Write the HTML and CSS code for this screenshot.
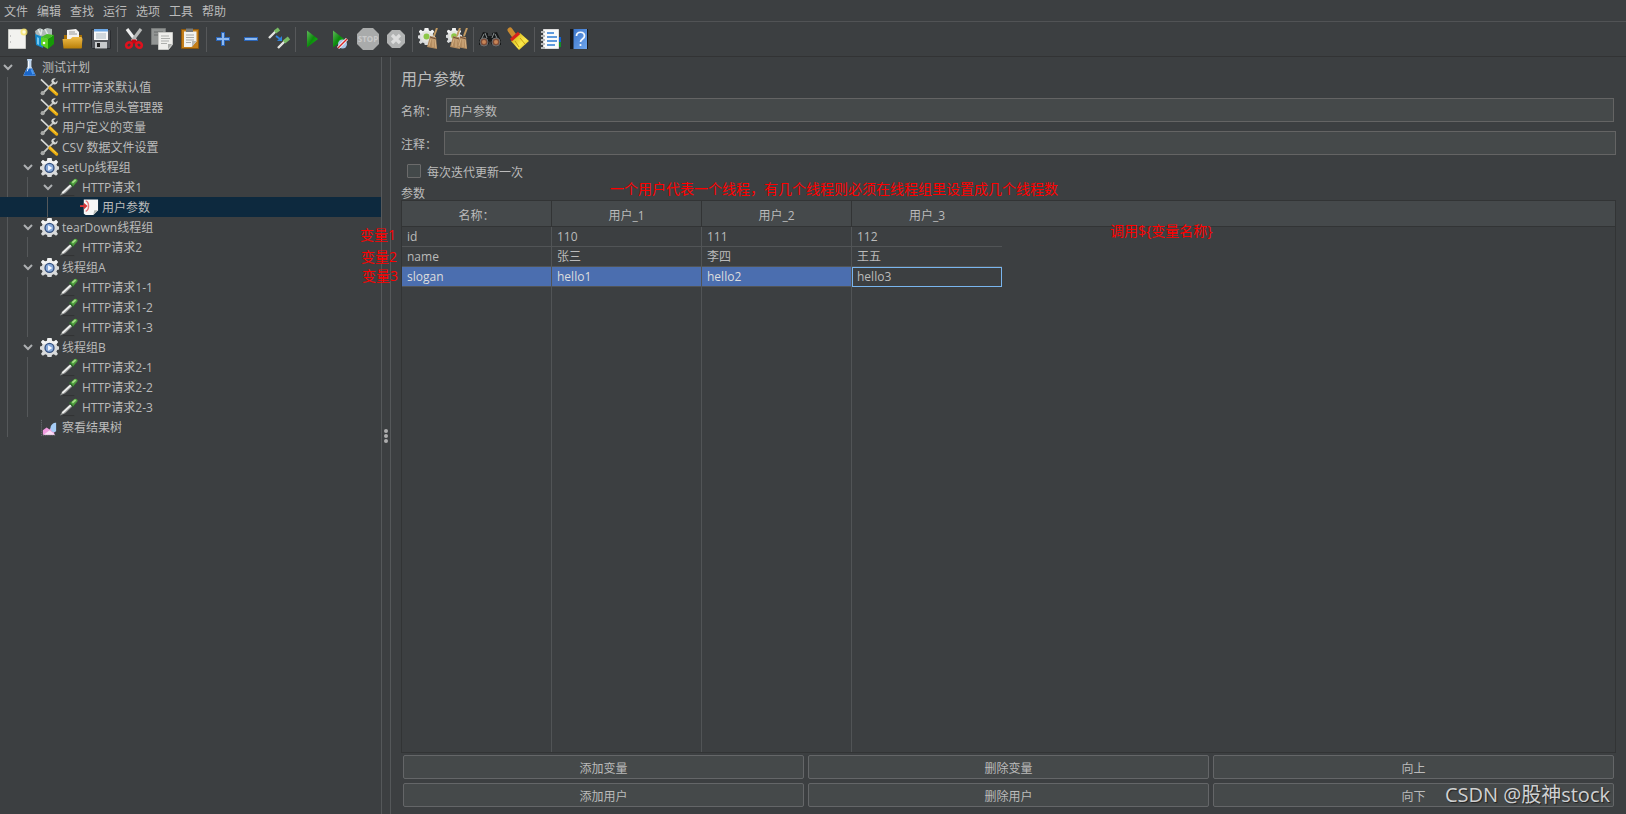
FILE: index.html
```html
<!DOCTYPE html>
<html lang="zh-CN">
<head>
<meta charset="utf-8">
<title>用户参数</title>
<link rel="stylesheet" href="styles.css">
</head>
<body>
<svg class="defs" aria-hidden="true">
  <defs>
    <linearGradient id="gGreen" x1="0" y1="0" x2="1" y2="1"><stop offset="0" stop-color="#5fb95a"/><stop offset=".5" stop-color="#0d8a0d"/><stop offset="1" stop-color="#12d012"/></linearGradient>
    <linearGradient id="gGold" x1="0" y1="0" x2="0" y2="1"><stop offset="0" stop-color="#f0bd4a"/><stop offset="1" stop-color="#b97f08"/></linearGradient>
    <linearGradient id="gYellow" x1="0" y1="0" x2="1" y2="1"><stop offset="0" stop-color="#c9a50a"/><stop offset=".6" stop-color="#fbe94a"/><stop offset="1" stop-color="#d0a80a"/></linearGradient>
    <linearGradient id="gBlue" x1="0" y1="0" x2="1" y2="1"><stop offset="0" stop-color="#3b74c9"/><stop offset="1" stop-color="#6ea6ee"/></linearGradient>
    <symbol id="tools" viewBox="0 0 20 20">
      <path d="M3 16 15 4" stroke="#c4c6c4" stroke-width="2"/>
      <path d="M18.500 2.500 16 5 14 3 16.500.4C13.500 0 11.500 1.500 12 4.200L14.500 6.800C17 7.200 19 5 18.500 2.500Z" fill="#d6d8d6"/>
      <circle cx="2.800" cy="16" r="2.200" fill="#a6a8a6"/>
      <path d="M1 1.500 10 10" stroke="#d8dad8" stroke-width="1.800"/>
      <path d="M10.500 10.500 17.500 17" stroke="#e9ac10" stroke-width="3.400" stroke-linecap="round"/>
      <path d="M10.500 10 17 16" stroke="#ffd84a" stroke-width="1"/>
    </symbol>
    <symbol id="gear" viewBox="0 0 20 20">
      <path d="M8 0h4l.6 3 1.800.8 2.600-1.600 1.900 2-1.600 2.500.8 1.800 2.900.5v3l-2.900.6-.8 1.600 1.600 2.600-2 2-2.500-1.600-1.800.7L12 20.500H8l-.6-2.600-1.800-.7L3 18.800l-2-2 1.700-2.600-.8-1.600L-.5 12V9l2.400-.5.8-1.800L1.100 4.200 3 2.200l2.600 1.600L7.400 3Z" fill="#d9dbdc"/>
      <path d="M8 0h4l.6 3 1.800.8 2.600-1.600 1.900 2-1.600 2.500H2.700L1.100 4.200 3 2.200l2.600 1.600L7.400 3Z" fill="#f1f2f2"/>
      <circle cx="10" cy="10.400" r="5.400" fill="#33507f"/><circle cx="10" cy="10.400" r="4" fill="#86a9da"/><path d="M8.500 7.500 13 10.400l-4.500 3Z" fill="#f5f8ff"/>
    </symbol>
    <symbol id="dropper" viewBox="0 0 20 20">
      <path d="M3 18.500h12" stroke="#303234" stroke-width="1"/>
      <path d="M0 18.500 2.500 14 10.500 6.500l2.500 2.500-7.500 7Z" fill="#989a98"/><path d="M2.500 16 11.500 7.500" stroke="#f4f4f4" stroke-width="1.700"/>
      <path d="m10 4.500 4.500 4.500" stroke="#2d622a" stroke-width="2"/>
      <path d="m11 5 3.500-3.500c1.500-1.500 4.500-.5 4 2l-4.500 5Z" fill="#4d9e3d"/><path d="m13 5 3.500-3" stroke="#a6dc87" stroke-width="2"/>
    </symbol>
    <symbol id="flask" viewBox="0 0 20 20">
      <path d="M7.500 1h5v1.500L12 3v6l4.200 8.500c.4 1-.2 1.500-1.200 1.500H5c-1 0-1.600-.5-1.200-1.500L8 9V3l-.5-.5Z" fill="#c2d7ee"/>
      <path d="M7 11h6l3 6.500c.3.900-.4 1.200-1 1.200H5c-.8 0-1.300-.4-1-1.200Z" fill="#1b67c9"/><path d="M9 3v7l-1.500 4" fill="none" stroke="#fff"/><path d="m12 12 2 5" stroke="#4f9bf1" stroke-width="2"/>
    </symbol>
    <symbol id="param" viewBox="0 0 20 20">
      <path d="M4 1.500h15V13l-5 5H6L4 16.500Z" fill="#f7f7f7"/><path d="M19 13h-4l-1 5Z" fill="#b8bbb6"/>
      <path d="M0 8.500h5" stroke="#d83437" stroke-width="2"/><path d="M4 5v7l4-3.500Z" fill="#d83437"/><path d="M6 3c4 1.500 4 9.500 0 11" fill="none" stroke="#e77779" stroke-width="1.500"/>
    </symbol>
    <symbol id="chart" viewBox="0 0 20 20">
      <path d="M1.500 2v16.500h15" fill="none" stroke="#717477" stroke-dasharray="1 1"/>
      <path d="M3 13 7 10l3 2 5-5v10.500H3Z" fill="#f19de0"/><path d="M11 11c0-4 3-6 6-6v9c-3 2-5 1-6-3Z" fill="#a6cdf6"/><path d="M4 17.500 10 13l6 4.500H4Z" fill="#fae0f7"/>
    </symbol>
    <symbol id="chev" viewBox="0 0 10 10"><path d="m1 3 4 4 4-4" fill="none" stroke="#adafb1" stroke-width="2"/></symbol>
    <symbol id="i-new" viewBox="0 0 24 24"><path d="M3.500 2.500h17v19h-17Z" fill="#f2f2ef" stroke="#c8c9c5"/><path d="M5 9h1M5 15h1" stroke="#999"/><circle cx="19" cy="5" r="3.500" fill="#f7e566" opacity=".8"/><circle cx="19" cy="5" r="1.700" fill="#fffce0"/></symbol>
    <symbol id="i-templates" viewBox="0 0 24 24"><path d="M2 4 7 1l3 2 4-2 5 1v8l-8 3-8-4Z" fill="#aeb9b8"/><path d="m5 2 3 6M12 2l3 6M9 2 8 7" stroke="#e0e7e6" stroke-width="1.500"/><path d="m2 7 8 3v11l-7-3Z" fill="#1389ca"/><path d="m4 10 2 1v7l-2-1Z" fill="#73c6ef"/><path d="m8 10 7 2v10l-7-4Z" fill="#5bd321"/><path d="m15 12 6-4v9l-6 5Z" fill="#169907"/><path d="m8 10 6-3 7 1-6 4Z" fill="#45bd22"/><circle cx="11" cy="16" r="1.300" fill="#fff"/></symbol>
    <symbol id="i-open" viewBox="0 0 24 24"><path d="M3 8h18v13H3Z" fill="#a66e05"/><path d="m6 3 9-1 3 3v8H6Z" fill="#f3f3f3"/><path d="M8 5h6M8 7h8" stroke="#999"/><path d="M1.500 12h8l2-2h9l1 2-1 9.500h-18Z" fill="url(#gGold)"/></symbol>
    <symbol id="i-save" viewBox="0 0 24 24"><path d="M2.500 2.500h18l1 1v18h-18l-1-1Z" fill="#53565b" stroke="#2b2d30"/><path d="M5 2h14v11H5Z" fill="#f8f8f8"/><path d="M5 2h14v2.500H5Z" fill="#6da8e6"/><path d="M7 7h10M7 9h10M7 11h10" stroke="#a8b6bf"/><path d="M6 15h12v6.500H6Z" fill="#c8cacc"/><path d="M8 16h3v4H8Z" fill="#222"/></symbol>
    <symbol id="i-cut" viewBox="0 0 24 24"><path d="M5 2 14 14" stroke="#eee" stroke-width="3.200"/><path d="M19 2 10 14" stroke="#b7b9b8" stroke-width="3.200"/><path d="M9.500 14.500h5" stroke="#c50712" stroke-width="4"/><ellipse cx="7" cy="18" rx="3" ry="2.600" transform="rotate(-38 7 18)" fill="none" stroke="#df111d" stroke-width="2.600"/><ellipse cx="17" cy="18" rx="3" ry="2.600" transform="rotate(38 17 18)" fill="none" stroke="#df111d" stroke-width="2.600"/></symbol>
    <symbol id="i-copy" viewBox="0 0 24 24"><path d="M1.500 1.500h14v16h-14Z" fill="#929594" stroke="#787b7a"/><path d="M4 5h9M4 8h5" stroke="#686b6a"/><path d="M8.500 5.500h14v12l-4 5h-10Z" fill="#eeeeeb" stroke="#c5c6c3"/><path d="M11 9h8M11 11.500h9M11 14h8M11 16.500h6" stroke="#adafac"/><path d="M22 17h-4v5Z" fill="#a8aaa7"/></symbol>
    <symbol id="i-paste" viewBox="0 0 24 24"><path d="M3.500 2.500h17v19h-17Z" fill="#c47e19" stroke="#8d570b"/><path d="M6 4.500h12.500v10l-5 5.500H6Z" fill="#f2f2ef"/><path d="M8 1.500h7V5H8Z" fill="#777b7c"/><path d="M8 8h8M8 10.500h8M8 13h8M8 15.500h5" stroke="#a8aaa7"/><path d="M18.500 14H14v6Z" fill="#b6b8b5"/></symbol>
    <symbol id="i-plus" viewBox="0 0 24 24"><path d="M5 12h14M12 5v14" stroke="#2b65b7" stroke-width="4"/><path d="M6 12h12M12 6v12" stroke="#8db9f0" stroke-width="2"/></symbol>
    <symbol id="i-minus" viewBox="0 0 24 24"><path d="M5 12h14" stroke="#2b65b7" stroke-width="4"/><path d="M6 12h12" stroke="#8db9f0" stroke-width="2"/></symbol>
    <symbol id="i-toggle" viewBox="0 0 24 24"><path d="m2 11 7-7M11 21l7-7" stroke="#e2e3e0" stroke-width="2.400"/><path d="m8 5 4-3M17 15l5-4" stroke="#78bb64" stroke-width="3.800"/><path d="m9 9 4 3" stroke="#3081dc" stroke-width="1.800"/><path d="m15 9 0 5-5 0Z" fill="#3081dc"/></symbol>
    <symbol id="i-run" viewBox="0 0 24 24"><path d="M7 3.500 18 12 7 20.500Z" fill="url(#gGreen)"/></symbol>
    <symbol id="i-runno" viewBox="0 0 24 24"><path d="M5 3.500 16 12 5 20.500Z" fill="url(#gGreen)"/><circle cx="14.500" cy="17" r="4.500" fill="#a9c4e5"/><path d="m10 21 9-9" stroke="#fff" stroke-width="3"/><path d="m10 21 9-9" stroke="#d42525" stroke-width="1.500"/></symbol>
    <symbol id="i-stop" viewBox="0 0 24 24"><path d="M7 1h10l6 6v10l-6 6H7l-6-6V7Z" fill="#a9abab"/><text x="12" y="15" class="stop-text">STOP</text></symbol>
    <symbol id="i-shut" viewBox="0 0 24 24"><path d="M8 3h8l5 5v8l-5 5H8l-5-5V8Z" fill="#b1b3b3"/><path d="m8 8 8 8M16 8l-8 8" stroke="#dcdddd" stroke-width="3.200"/></symbol>
    <symbol id="broom" viewBox="0 0 12 22"><path d="M11 0 8 8" stroke="#c29a61" stroke-width="2"/><path d="m4 8 6 1 1 12-10-2Z" fill="#b38c60"/><path d="M5 11 3 18M7 11v8M9 11l1 9" stroke="#d4b083"/><path d="m4 9 6 2" stroke="#725139"/></symbol>
    <symbol id="i-clear" viewBox="0 0 24 24"><svg x="1" y="1" width="17" height="17" viewBox="0 0 20 20"><use href="#gear"/><circle cx="10" cy="10" r="6.500" fill="#e4e5df"/><circle cx="10" cy="10" r="3.500" fill="#8cc747"/></svg><use href="#broom" x="9" y="1" width="12" height="22"/></symbol>
    <symbol id="i-clearall" viewBox="0 0 24 24"><svg x="1" y="1" width="16" height="16" viewBox="0 0 20 20"><use href="#gear"/><circle cx="10" cy="10" r="6.500" fill="#e4e5df"/><circle cx="10" cy="10" r="3.500" fill="#8cc747"/></svg><use href="#broom" x="4" y="1" width="12" height="22"/><use href="#broom" x="11" y="1" width="12" height="22"/></symbol>
    <symbol id="i-find" viewBox="0 0 24 24"><path d="m5 5 5 1v3h4V6l5-1 4 9v4H14l-2-4-2 4H1v-4Z" fill="#17191a"/><path d="m6 7-3 6M17 7l3 6M7 6l2 5M16 6l-2 5" stroke="#8a9192"/><circle cx="6" cy="15" r="4" fill="#7e4d38" stroke="#6a6e70"/><circle cx="18" cy="15" r="4" fill="#7e4d38" stroke="#6a6e70"/><circle cx="6" cy="15" r="2" fill="#c98557"/><circle cx="18" cy="15" r="2" fill="#c98557"/></symbol>
    <symbol id="i-sweep" viewBox="0 0 24 24"><path d="m4 3 5 7" stroke="#c98a30" stroke-width="5" stroke-linecap="round"/><path d="m5 14 9-8 9 8-10 9Z" fill="url(#gYellow)"/><path d="m5 13 8-7" stroke="#d6211b" stroke-width="3"/><path d="m9 14 4 6M14 11l5 6" stroke="#c39d12"/></symbol>
    <symbol id="i-list" viewBox="0 0 24 24"><path d="M18 10h4v5h-4Z" fill="#1261d1"/><path d="M18 15h4v5h-4Z" fill="#128f2a"/><path d="M4.500 2.500h15v19h-15Z" fill="#fafafa" stroke="#ddd"/><path d="M2 5h4M2 9h4M2 13h4M2 17h4M2 21h4" stroke="#b6b8b9" stroke-width="2"/><path d="M8 6h7M8 10h10M8 14h10M8 18h8" stroke="#2c7bd2" stroke-width="1.500"/></symbol>
    <symbol id="i-help" viewBox="0 0 24 24"><path d="M3 2h18v20H3Z" fill="#18191b"/><path d="M6.500 2H20v20H6.500Z" fill="url(#gBlue)"/><path d="M9.500 9c0-5 8-5 8 0 0 3-4 3-4 6M13.500 17v2" fill="none" stroke="#f4f8fe" stroke-width="1.700"/></symbol>
  </defs>
</svg>

<nav class="menubar">
  <button>文件</button><button>编辑</button><button>查找</button><button>运行</button><button>选项</button><button>工具</button><button>帮助</button>
</nav>

<div class="toolbar" role="toolbar">
  <button aria-label="新建"><svg><use href="#i-new"/></svg></button>
  <button aria-label="模板"><svg><use href="#i-templates"/></svg></button>
  <button aria-label="打开"><svg><use href="#i-open"/></svg></button>
  <button aria-label="保存"><svg><use href="#i-save"/></svg></button>
  <span class="sep"></span>
  <button aria-label="剪切"><svg><use href="#i-cut"/></svg></button>
  <button aria-label="复制"><svg><use href="#i-copy"/></svg></button>
  <button aria-label="粘贴"><svg><use href="#i-paste"/></svg></button>
  <span class="sep"></span>
  <button aria-label="展开"><svg><use href="#i-plus"/></svg></button>
  <button aria-label="折叠"><svg><use href="#i-minus"/></svg></button>
  <button aria-label="切换"><svg><use href="#i-toggle"/></svg></button>
  <span class="sep"></span>
  <button aria-label="启动"><svg><use href="#i-run"/></svg></button>
  <button aria-label="不停顿启动"><svg><use href="#i-runno"/></svg></button>
  <button aria-label="停止"><svg><use href="#i-stop"/></svg></button>
  <button aria-label="关闭"><svg><use href="#i-shut"/></svg></button>
  <span class="sep"></span>
  <button aria-label="清除"><svg><use href="#i-clear"/></svg></button>
  <button aria-label="清除全部"><svg><use href="#i-clearall"/></svg></button>
  <span class="sep"></span>
  <button aria-label="查找"><svg><use href="#i-find"/></svg></button>
  <button aria-label="重置查找"><svg><use href="#i-sweep"/></svg></button>
  <span class="sep"></span>
  <button aria-label="函数助手"><svg><use href="#i-list"/></svg></button>
  <button aria-label="帮助"><svg><use href="#i-help"/></svg></button>
</div>

<div class="workspace">
  <aside class="tree">
    <div class="node"><svg class="chev"><use href="#chev"/></svg><svg class="ico"><use href="#flask"/></svg><span>测试计划</span></div>
    <ul class="d1">
      <li><div class="node"><svg class="ico"><use href="#tools"/></svg><span>HTTP请求默认值</span></div></li>
      <li><div class="node"><svg class="ico"><use href="#tools"/></svg><span>HTTP信息头管理器</span></div></li>
      <li><div class="node"><svg class="ico"><use href="#tools"/></svg><span>用户定义的变量</span></div></li>
      <li><div class="node"><svg class="ico"><use href="#tools"/></svg><span>CSV 数据文件设置</span></div></li>
      <li><div class="node"><svg class="chev"><use href="#chev"/></svg><svg class="ico"><use href="#gear"/></svg><span>setUp线程组</span></div>
        <ul class="d2">
          <li><div class="node"><svg class="chev"><use href="#chev"/></svg><svg class="ico"><use href="#dropper"/></svg><span>HTTP请求1</span></div>
            <ul class="d3"><li><div class="node selected"><svg class="ico"><use href="#param"/></svg><span>用户参数</span></div></li></ul>
          </li>
        </ul>
      </li>
      <li><div class="node"><svg class="chev"><use href="#chev"/></svg><svg class="ico"><use href="#gear"/></svg><span>tearDown线程组</span></div>
        <ul class="d2"><li><div class="node"><svg class="ico"><use href="#dropper"/></svg><span>HTTP请求2</span></div></li></ul>
      </li>
      <li><div class="node"><svg class="chev"><use href="#chev"/></svg><svg class="ico"><use href="#gear"/></svg><span>线程组A</span></div>
        <ul class="d2">
          <li><div class="node"><svg class="ico"><use href="#dropper"/></svg><span>HTTP请求1-1</span></div></li>
          <li><div class="node"><svg class="ico"><use href="#dropper"/></svg><span>HTTP请求1-2</span></div></li>
          <li><div class="node"><svg class="ico"><use href="#dropper"/></svg><span>HTTP请求1-3</span></div></li>
        </ul>
      </li>
      <li><div class="node"><svg class="chev"><use href="#chev"/></svg><svg class="ico"><use href="#gear"/></svg><span>线程组B</span></div>
        <ul class="d2">
          <li><div class="node"><svg class="ico"><use href="#dropper"/></svg><span>HTTP请求2-1</span></div></li>
          <li><div class="node"><svg class="ico"><use href="#dropper"/></svg><span>HTTP请求2-2</span></div></li>
          <li><div class="node"><svg class="ico"><use href="#dropper"/></svg><span>HTTP请求2-3</span></div></li>
        </ul>
      </li>
      <li><div class="node"><svg class="ico"><use href="#chart"/></svg><span>察看结果树</span></div></li>
    </ul>
  </aside>
  <div class="divider"><i></i><i></i><i></i></div>
  <main class="panel">
    <h1>用户参数</h1>
    <div class="field name"><label for="name">名称：</label><input id="name" type="text" value="用户参数"></div>
    <div class="field"><label for="comment">注释：</label><input id="comment" type="text"></div>
    <label class="check"><input type="checkbox"><span>每次迭代更新一次</span></label>
    <div class="caption">参数</div>
    <div class="grid">
      <table>
        <colgroup><col class="c"><col class="c"><col class="c"><col class="c"><col></colgroup>
        <thead><tr><th>名称：</th><th>用户_1</th><th>用户_2</th><th>用户_3</th><th></th></tr></thead>
        <tbody>
          <tr><td>id</td><td>110</td><td>111</td><td>112</td><td></td></tr>
          <tr><td>name</td><td>张三</td><td>李四</td><td>王五</td><td></td></tr>
          <tr class="active"><td>slogan</td><td>hello1</td><td>hello2</td><td class="focus">hello3</td><td></td></tr>
          <tr class="rest"><td></td><td></td><td></td><td></td><td></td></tr>
        </tbody>
      </table>
    </div>
    <div class="actions">
      <button>添加变量</button><button>删除变量</button><button>向上</button>
      <button>添加用户</button><button>删除用户</button><button>向下</button>
    </div>
    <span class="note n1">变量1</span>
    <span class="note n2">变量2</span>
    <span class="note n3">变量3</span>
    <span class="note n4">一个用户代表一个线程，有几个线程则必须在线程组里设置成几个线程数</span>
    <span class="note n5">调用${变量名称}</span>
    <span class="watermark">CSDN @股神stock</span>
  </main>
</div>
</body>
</html>
```

FILE: styles.css
```css
* { box-sizing: border-box; }
body {
  margin: 0;
  min-height: 100vh;
  display: flex;
  flex-direction: column;
  background: #3c3f41;
  color: #bbbbbb;
  font: 12px/20px "Open Sans", "Noto Sans CJK SC", sans-serif;
}
button, input { font: inherit; color: inherit; }
.defs { position: absolute; width: 0; height: 0; }

.menubar {
  display: flex;
  gap: 9px;
  height: 22px;
  padding: 0 4px;
  border-bottom: 1px solid #515355;
}
.menubar button { padding: 2px 0 0; border: 0; background: none; }

.toolbar {
  display: flex;
  align-items: center;
  height: 35px;
  padding: 0 3px;
  border-bottom: 1px solid #323334;
}
.toolbar button {
  display: flex;
  justify-content: center;
  width: 28px;
  padding: 0;
  border: 0;
  background: none;
}
.toolbar svg { width: 24px; height: 24px; }
.toolbar .sep { width: 5px; height: 25px; display: flex; justify-content: center; }
.toolbar .sep::before { content: ""; width: 1px; background: #56585a; }
.stop-text { font: bold 8px "Open Sans", sans-serif; fill: #c9caca; text-anchor: middle; }

.workspace { flex: 1; display: flex; }

.tree { width: 381px; flex: none; }
.tree ul { list-style: none; margin: 0; padding: 0; position: relative; }
.tree ul::before {
  content: "";
  position: absolute;
  top: 0;
  bottom: 0;
  left: var(--guide);
  width: 1px;
  background: #55585a;
}
.tree { --indent: 20px; }
.d1 { --guide: 7px; }
.d1 .node { --indent: 40px; }
.d2 { --guide: 27px; }
.d2 .node { --indent: 60px; }
.d3 { --guide: 47px; }
.d3 .node { --indent: 80px; }
.node {
  display: flex;
  align-items: center;
  gap: 3px;
  height: 20px;
  padding-left: var(--indent);
  white-space: nowrap;
}
.node span { padding-top: 2px; }
.node .ico { width: 19px; height: 19px; flex: none; }
.node .chev { width: 10px; height: 10px; flex: none; margin-left: -17px; margin-right: 4px; }
.node.selected { background: #0d293e; }

.divider {
  display: flex;
  flex-direction: column;
  align-items: center;
  justify-content: center;
  gap: 1px;
  width: 10px;
  flex: none;
  border-left: 1px solid #55585a;
  border-right: 1px solid #55585a;
}
.divider i { width: 4px; height: 4px; border-radius: 2px; background: #adadad; }

.panel {
  position: relative;
  flex: 1;
  min-width: 0;
  display: flex;
  flex-direction: column;
  padding: 12px 10px 7px;
}
h1 { margin: 0 0 9px; font-size: 16px; line-height: 20px; font-weight: normal; }
.field { display: flex; align-items: center; gap: 7px; margin-bottom: 9px; }
.field.name { gap: 9px; padding-right: 2px; }
.field label { width: 36px; flex: none; padding-top: 3px; }
.field input {
  flex: 1;
  min-width: 0;
  height: 24px;
  padding: 2px 2px 0;
  border: 1px solid #646464;
  background: #45494a;
  outline: 0;
}
.check { display: flex; align-items: center; gap: 6px; height: 14px; padding-left: 6px; }
.check span { padding-top: 3px; }
.check input {
  appearance: none;
  width: 14px;
  height: 14px;
  margin: 0;
  border: 1px solid #6b6b6b;
  border-radius: 1px;
  background: #43494a;
}
.caption { margin-top: 5px; height: 17px; line-height: 22px; }

.grid { flex: 1; display: flex; border: 1px solid #323435; }
table { width: 100%; table-layout: fixed; border-collapse: separate; border-spacing: 0; }
col.c { width: 150px; }
th, td { height: 20px; padding: 0 5px; line-height: 19px; text-align: left; white-space: nowrap; }
th {
  height: 26px;
  padding-top: 3px;
  font-weight: normal;
  text-align: center;
  background: #45494b;
  border-right: 1px solid #323435;
  border-bottom: 1px solid #323435;
}
th:nth-child(n+4) { border-right: 0; }
td { border-right: 1px solid #515456; border-bottom: 1px solid #515456; }
td:nth-child(n+4) { border-right: 0; }
td:last-child, .rest td { border-bottom: 0; }
.rest td { height: auto; }
.active td:nth-child(-n+3) { background: #4b6eaf; color: #dddddd; }
td.focus { border: 1px solid #79b5ee; padding: 0 4px; line-height: 18px; }

.actions {
  display: grid;
  grid-template-columns: repeat(3, 1fr);
  gap: 4px;
  padding: 2px 2px 0;
}
.actions button {
  height: 24px;
  padding: 3px 0 0;
  border: 1px solid #646668;
  border-radius: 2px;
  background: #45494a;
}

.note {
  position: absolute;
  color: #ff0000;
  font-size: 14px;
  line-height: 20px;
  white-space: nowrap;
}
.n1 { left: -31px; top: 168px; }
.n2 { left: -30px; top: 190px; }
.n3 { left: -29px; top: 209px; }
.n4 { left: 219px; top: 122px; }
.n5 { left: 719px; top: 164px; }
.watermark {
  position: absolute;
  right: 16px;
  bottom: 4px;
  color: #d0d1d2;
  font-size: 20px;
  line-height: 30px;
  text-shadow: 1px 1px 1px #222222;
  pointer-events: none;
}
```
